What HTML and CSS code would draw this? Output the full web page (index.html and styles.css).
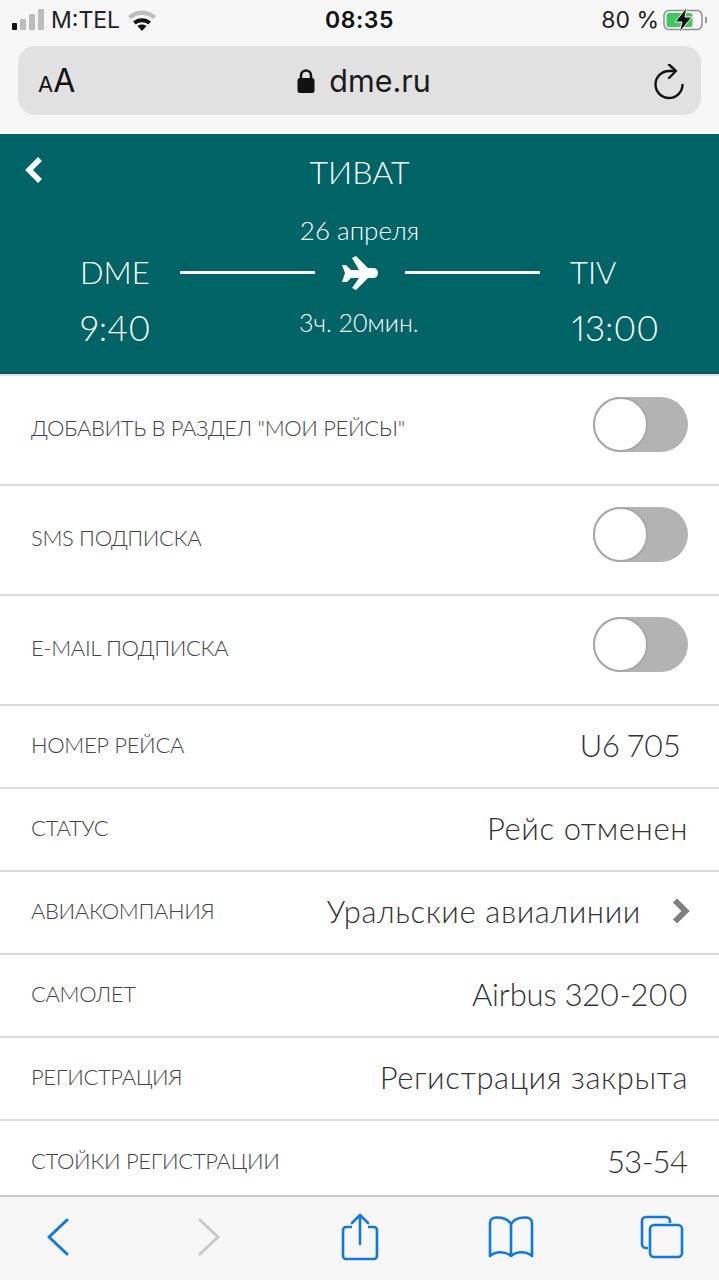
FILE: index.html
```html
<!DOCTYPE html>
<html lang="ru">
<head>
  <meta charset="UTF-8" />
  <meta name="viewport" content="width=device-width, initial-scale=1.0" />
  <title>Тиват</title>
  <link rel="stylesheet" href="styles.css">
</head>
<body>
  <div class="phone">
    <!-- Safari top -->
    <div class="browser-top">
      <div class="status">
        <div class="status-left">
          <svg class="signal" width="34" height="22" viewBox="0 0 34 22">
            <rect x="0" y="14" width="5" height="7" rx="1" fill="#111"/>
            <rect x="8" y="10" width="6" height="11" rx="1" fill="#bdbdbd"/>
            <rect x="17" y="5" width="6" height="16" rx="1" fill="#bdbdbd"/>
            <rect x="26" y="0" width="6" height="21" rx="1" fill="#bdbdbd"/>
          </svg>
          <span class="carrier">M:TEL</span>
          <svg class="wifi" width="30" height="22" viewBox="0 0 30 22">
            <path d="M1 7C9-.5 21-.5 29 7l-2.800 3C20 4.500 10 4.500 3.800 10z" fill="#bdbdbd"/>
            <path d="M6 12.500C11 8 19 8 24 12.500l-2.800 3C17.500 12.500 12.500 12.500 8.800 15.500z" fill="#111"/>
            <path d="M10.500 17c2.500-2 6.500-2 9 0L15 22z" fill="#111"/>
          </svg>
        </div>
        <span class="clock">08:35</span>
        <div class="status-right">
          <span class="percent">80 %</span>
          <svg class="battery" width="46" height="28" viewBox="0 0 46 28">
            <rect x="3" y="4.500" width="38" height="19" rx="5" fill="none" stroke="#8e8e8e" stroke-width="1.500"/>
            <rect x="5.500" y="7" width="26" height="14" rx="2.500" fill="#3fc95c"/>
            <rect x="44" y="10.500" width="2" height="7" rx="1" fill="#9a9a9a"/>
            <path d="M26 1 14 16h7l-3 11 13-16h-7z" fill="#111" stroke="#f7f7f7" stroke-width="1"/>
          </svg>
        </div>
      </div>
      <div class="urlbar">
        <span class="text-size"><small>A</small>A</span>
        <div class="address">
          <svg width="18" height="26" viewBox="0 0 18 26">
            <path d="M4 11V7.500a5 5 0 0 1 10 0V11" fill="none" stroke="#111" stroke-width="2.500"/>
            <rect x="0.500" y="10" width="17" height="15" rx="2.500" fill="#111"/>
          </svg>
          <span>dme.ru</span>
        </div>
        <svg class="reload" width="30" height="36" viewBox="0 0 30 36">
          <path d="M21 7H15A13.500 13.500 0 1 0 28.500 21" fill="none" stroke="#111" stroke-width="2.400" stroke-linecap="round"/>
          <path d="M15 0.500 22 7l-7 7" fill="none" stroke="#111" stroke-width="2.400" stroke-linecap="round" stroke-linejoin="round"/>
        </svg>
      </div>
    </div>

    <!-- Flight header -->
    <header class="flight">
      <svg class="back" width="20" height="28" viewBox="0 0 20 28">
        <path d="M16 3 5 14l11 11" fill="none" stroke="#fff" stroke-width="5.500"/>
      </svg>
      <h1>ТИВАТ</h1>
      <div class="date">26 апреля</div>
      <div class="route">
        <span class="code">DME</span>
        <div class="line"></div>
        <svg class="plane" width="38" height="36" viewBox="0 0 38 36">
          <path d="M11 3l4-2 12 12h5c3 0 5 2 5 5s-2 5-5 5h-5L15 35l-4-2 7-10h-8l-4 4H1l3-9-3-8h4l5 5h8z" fill="#fff"/>
        </svg>
        <div class="line"></div>
        <span class="code">TIV</span>
      </div>
      <div class="times">
        <span class="time">9:40</span>
        <span class="duration">3ч. 20мин.</span>
        <span class="time">13:00</span>
      </div>
    </header>

    <!-- Rows -->
    <div class="list">
      <div class="row row-switch">
        <span class="label">ДОБАВИТЬ В РАЗДЕЛ "МОИ РЕЙСЫ"</span>
        <div class="switch"><div class="knob"></div></div>
      </div>
      <div class="row row-switch">
        <span class="label">SMS ПОДПИСКА</span>
        <div class="switch"><div class="knob"></div></div>
      </div>
      <div class="row row-switch">
        <span class="label">E-MAIL ПОДПИСКА</span>
        <div class="switch"><div class="knob"></div></div>
      </div>
      <div class="row">
        <span class="label">НОМЕР РЕЙСА</span>
        <span class="value num flight-no">U6 705</span>
      </div>
      <div class="row">
        <span class="label">СТАТУС</span>
        <span class="value">Рейс отменен</span>
      </div>
      <div class="row">
        <span class="label">АВИАКОМПАНИЯ</span>
        <div class="value-link">
          <span class="value">Уральские авиалинии</span>
          <svg width="20" height="28" viewBox="0 0 20 28">
            <path d="M4 3.500 14.500 14 4 24.500" fill="none" stroke="#808080" stroke-width="6"/>
          </svg>
        </div>
      </div>
      <div class="row">
        <span class="label">САМОЛЕТ</span>
        <span class="value num">Airbus 320-200</span>
      </div>
      <div class="row">
        <span class="label">РЕГИСТРАЦИЯ</span>
        <span class="value">Регистрация закрыта</span>
      </div>
      <div class="row row-last">
        <span class="label">СТОЙКИ РЕГИСТРАЦИИ</span>
        <span class="value num">53-54</span>
      </div>
    </div>

    <!-- Safari bottom -->
    <nav class="toolbar">
      <svg width="24" height="38" viewBox="0 0 24 38">
        <path d="M21 2 3 19l18 17" fill="none" stroke="#0f78e6" stroke-width="3" stroke-linecap="round" stroke-linejoin="round"/>
      </svg>
      <svg width="24" height="38" viewBox="0 0 24 38">
        <path d="M3 2l18 17L3 36" fill="none" stroke="#c8c8c8" stroke-width="3" stroke-linecap="round" stroke-linejoin="round"/>
      </svg>
      <svg width="38" height="48" viewBox="0 0 38 48">
        <path d="M11 14H5a3 3 0 0 0-3 3v26a3 3 0 0 0 3 3h28a3 3 0 0 0 3-3V17a3 3 0 0 0-3-3h-6" fill="none" stroke="#0f78e6" stroke-width="2.600"/>
        <path d="M19 31V2M11 10l8-8 8 8" fill="none" stroke="#0f78e6" stroke-width="2.600" stroke-linecap="round" stroke-linejoin="round"/>
      </svg>
      <svg width="46" height="42" viewBox="0 0 46 42">
        <path d="M23 8C20 3 15 1.500 9 1.500 5 1.500 2 3 2 7v33c6-5 15-5 21 0 6-5 15-5 21 0V7c0-4-3-5.500-7-5.500-6 0-11 1.500-14 6.500zM23 8v31" fill="none" stroke="#0f78e6" stroke-width="2.600" stroke-linejoin="round"/>
      </svg>
      <svg width="44" height="44" viewBox="0 0 44 44">
        <path d="M8 33H6a4 4 0 0 1-4-4V6a4 4 0 0 1 4-4h20a4 4 0 0 1 4 4v2" fill="none" stroke="#0f78e6" stroke-width="2.600"/>
        <rect x="10" y="10" width="32" height="32" rx="4" fill="none" stroke="#0f78e6" stroke-width="2.600"/>
      </svg>
    </nav>
  </div>
</body>
</html>
```

FILE: styles.css
```css
* {
    box-sizing: border-box;
}
html, body {
    margin: 0;
    padding: 0;
}
body {
    font-family: Lato, "Open Sans", sans-serif;
    background: #fff;
}
.phone {
    width: 719px;
    height: 1280px;
    display: flex;
    flex-direction: column;
    overflow: hidden;
}

/* safari top */
.browser-top {
    height: 134px;
    flex: none;
    background: #f7f7f7;
    font-family: Inter, "Liberation Sans", sans-serif;
    color: #111;
}
.status {
    height: 46px;
    padding: 0 12px;
    display: grid;
    grid-template-columns: 1fr auto 1fr;
    align-items: center;
    font-size: 23px;
    padding-bottom: 6px;
}
.status-left {
    display: flex;
    align-items: center;
}
.carrier {
    margin-left: 5px;
    color: #222;
}
.wifi {
    margin-left: 7px;
}
.clock {
    font-weight: 600;
    letter-spacing: 0.5px;
}
.status-right {
    display: flex;
    align-items: center;
    justify-content: flex-end;
}
.percent {
    margin-right: 2px;
    color: #222;
}
.urlbar {
    height: 69px;
    margin: 0 18px;
    padding: 0 17px 0 20px;
    background: #e1e1e1;
    border-radius: 17px;
    display: flex;
    align-items: center;
    justify-content: space-between;
}
.text-size {
    font-size: 32px;
    width: 36px;
    white-space: nowrap;
}
.text-size small {
    font-size: 22px;
}
.address {
    display: flex;
    align-items: center;
    gap: 14px;
    font-size: 30.5px;
    color: #1a1a1a;
}
.reload {
    margin-top: 3px;
}

/* flight header */
.flight {
    position: relative;
    height: 242px;
    flex: none;
    background: #006366;
    color: #fff;
    text-align: center;
    padding-top: 20px;
    font-weight: 300;
    border-bottom: 2px solid #cfe9ee;
    box-shadow: inset 0 -2px 0 #0b5557;
}
.flight h1 {
    margin: 0;
    font-size: 32px;
    line-height: 36px;
    font-weight: 300;
}
.back {
    position: absolute;
    left: 24px;
    top: 22px;
}
.date {
    margin-top: 25px;
    font-size: 26px;
    line-height: 30px;
    height: 30px;
}
.route {
    display: flex;
    align-items: center;
    margin-top: 7px;
    padding: 0 0 0 80px;
    height: 40px;
    font-size: 31px;
}
.code {
    width: 100px;
    text-align: left;
}
.line {
    width: 135px;
    height: 3px;
    margin-top: 1px;
    background: #fff;
}
.plane {
    margin: 1px 26px 0;
}
.route .code:last-child {
    margin-left: 30px;
}
.times {
    display: flex;
    justify-content: space-between;
    align-items: center;
    padding: 0 60px 0 80px;
    margin-top: 14px;
}
.time {
    font-size: 35px;
    line-height: 42px;
    font-variant-numeric: proportional-nums;
}
.duration {
    font-size: 25px;
    margin: 0 5px 10px 0;
}

/* rows */
.list {
    flex: 1;
    min-height: 0;
    overflow: hidden;
    background: #fff;
}
.row {
    height: 83px;
    padding: 0 31px 4px;
    display: flex;
    align-items: center;
    justify-content: space-between;
    border-bottom: 2px solid #dcdcdc;
}
.row-switch {
    height: 110px;
    padding-bottom: 6px;
}
.row-last {
    border-bottom: none;
}
.label {
    font-size: 22px;
    font-weight: 300;
    letter-spacing: -0.35px;
    color: #444;
}
.value {
    font-size: 31px;
    font-weight: 300;
    color: #333;
    letter-spacing: 0.6px;
    font-variant-numeric: proportional-nums;
}
.num {
    letter-spacing: -0.15px;
}
.flight-no {
    margin-right: 8px;
}
.value-link {
    display: flex;
    align-items: center;
    gap: 30px;
    margin-right: -3px;
}
.switch {
    width: 95px;
    height: 55px;
    margin-bottom: 6px;
    border-radius: 28px;
    background: #b3b3b3;
}
.knob {
    width: 55px;
    height: 55px;
    border-radius: 50%;
    background: #fff;
    border: 2px solid #a8a8a8;
}

/* safari bottom */
.toolbar {
    height: 85px;
    flex: none;
    background: #f7f7f7;
    border-top: 2px solid #c9c9c9;
    display: grid;
    grid-template-columns: repeat(5, 151px);
    justify-content: center;
    justify-items: center;
    align-items: center;
    padding-bottom: 4px;
}
```
